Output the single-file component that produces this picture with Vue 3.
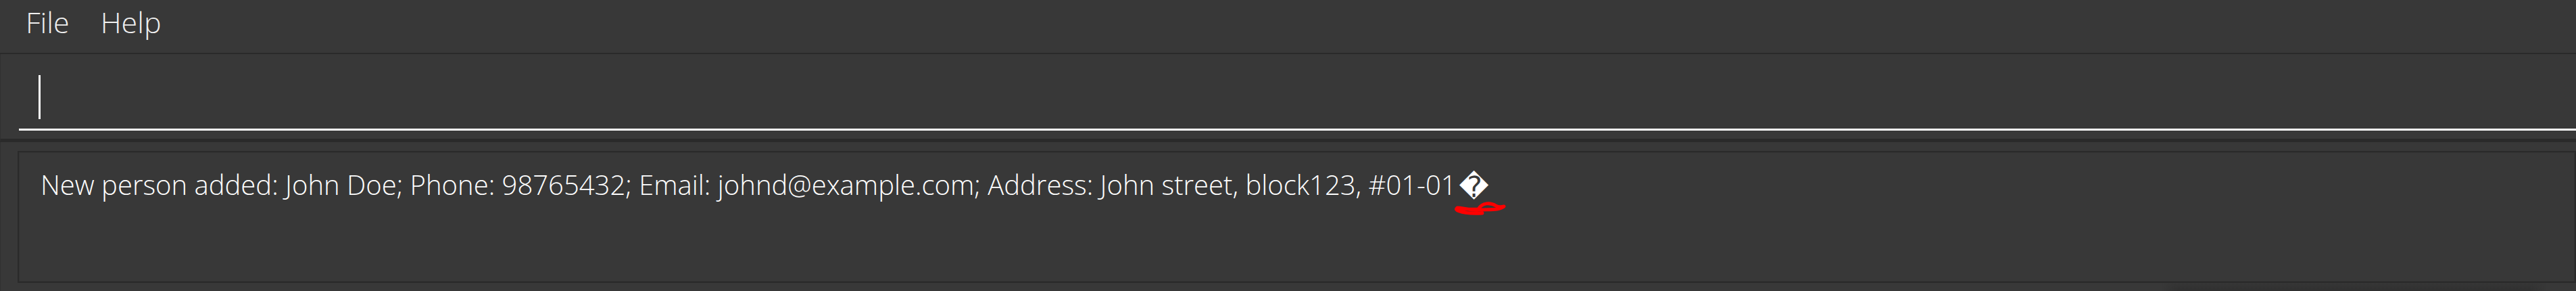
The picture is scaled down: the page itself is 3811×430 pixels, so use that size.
<script setup>
import { ref } from 'vue'

const menus = ['File', 'Help']
const command = ref('')
const message =
  'New person added: John Doe; Phone: 98765432; Email: johnd@example.com; Address: John street, block123, #01-01'
</script>

<template>
  <main class="window">
    <nav class="menu-bar" aria-label="Main menu">
      <button v-for="name in menus" :key="name" type="button" class="menu">{{ name }}</button>
    </nav>

    <form class="command-pane" @submit.prevent>
      <div class="command-field">
        <input v-model="command" class="command-input" type="text" aria-label="Command" autocomplete="off" />
        <span class="caret" aria-hidden="true"></span>
      </div>
    </form>

    <section class="result-pane" aria-label="Result">
      <output class="result-box">
        <span>{{ message }}</span>
        <span class="unknown">&#xFFFD;<svg class="scribble" viewBox="0 0 80 24" aria-hidden="true">
          <path d="M5 11 Q22 13 36 12 C42 2 54 2 62 7 Q67 10 74 8 C66 14 54 12 38 13 C22 14 13 10 5 10 Q1 13 8 15 Q17 19 42 18" />
        </svg></span>
      </output>
      <div class="list-shadow" aria-hidden="true"></div>
    </section>
  </main>
</template>

<style>
html {
  background: #383838;
}
body {
  margin: 0;
}
</style>

<style scoped>
.window {
  box-sizing: border-box;
  height: 100vh;
  display: flex;
  flex-direction: column;
  overflow: hidden;
  background: #383838;
  color: #fff;
  font-family: "Open Sans", "Noto Sans", sans-serif;
  font-weight: 300;
}
.menu-bar {
  display: flex;
  gap: 46px;
  padding: 0 38px;
  height: 78px;
  border-bottom: 2px solid #2a2a2a;
}
.menu {
  padding: 0;
  border: 0;
  background: none;
  color: #f0f0f0;
  font: inherit;
  font-size: 43px;
  line-height: 66px;
  height: 66px;
}
.command-pane {
  padding: 8px 0 12px 27px;
  border-left: 1px solid #303030;
  border-bottom: 5px solid #2a2a2a;
}
.command-field {
  position: relative;
}
.command-input {
  display: block;
  box-sizing: border-box;
  width: 100%;
  height: 105px;
  padding: 0 30px;
  border: 0;
  border-bottom: 3px solid #fff;
  outline: 0;
  background: none;
  color: #fff;
  font: inherit;
  font-size: 43px;
}
.caret {
  position: absolute;
  left: 29px;
  top: 23px;
  width: 3px;
  height: 65px;
  background: #fff;
}
.result-pane {
  flex: 1;
  display: flex;
  flex-direction: column;
  padding: 13px 0 0 25px;
  border-left: 1px solid #303030;
}
.result-box {
  flex: 1;
  box-sizing: border-box;
  display: flex;
  align-items: flex-start;
  gap: 4px;
  padding: 18px 32px;
  border: 2px solid #2a2a2a;
  box-shadow: inset 0 0 0 1px #333;
  font-size: 40px;
  line-height: 60px;
  white-space: nowrap;
}
.unknown {
  position: relative;
  font-family: "DejaVu Sans", sans-serif;
  font-weight: 400;
  font-size: 43px;
  line-height: 66px;
}
.scribble {
  position: absolute;
  left: -8px;
  bottom: -12px;
  width: 80px;
  height: 24px;
  fill: none;
  stroke: #f00;
  stroke-width: 5;
  stroke-linecap: round;
  stroke-linejoin: round;
}
.list-shadow {
  height: 12px;
  margin: 0 45px 0 auto;
  width: 15%;
  background: linear-gradient(#363636, #303030);
  mask-image: linear-gradient(to right, transparent, #000 24px, #000 calc(100% - 24px), transparent);
}
</style>
